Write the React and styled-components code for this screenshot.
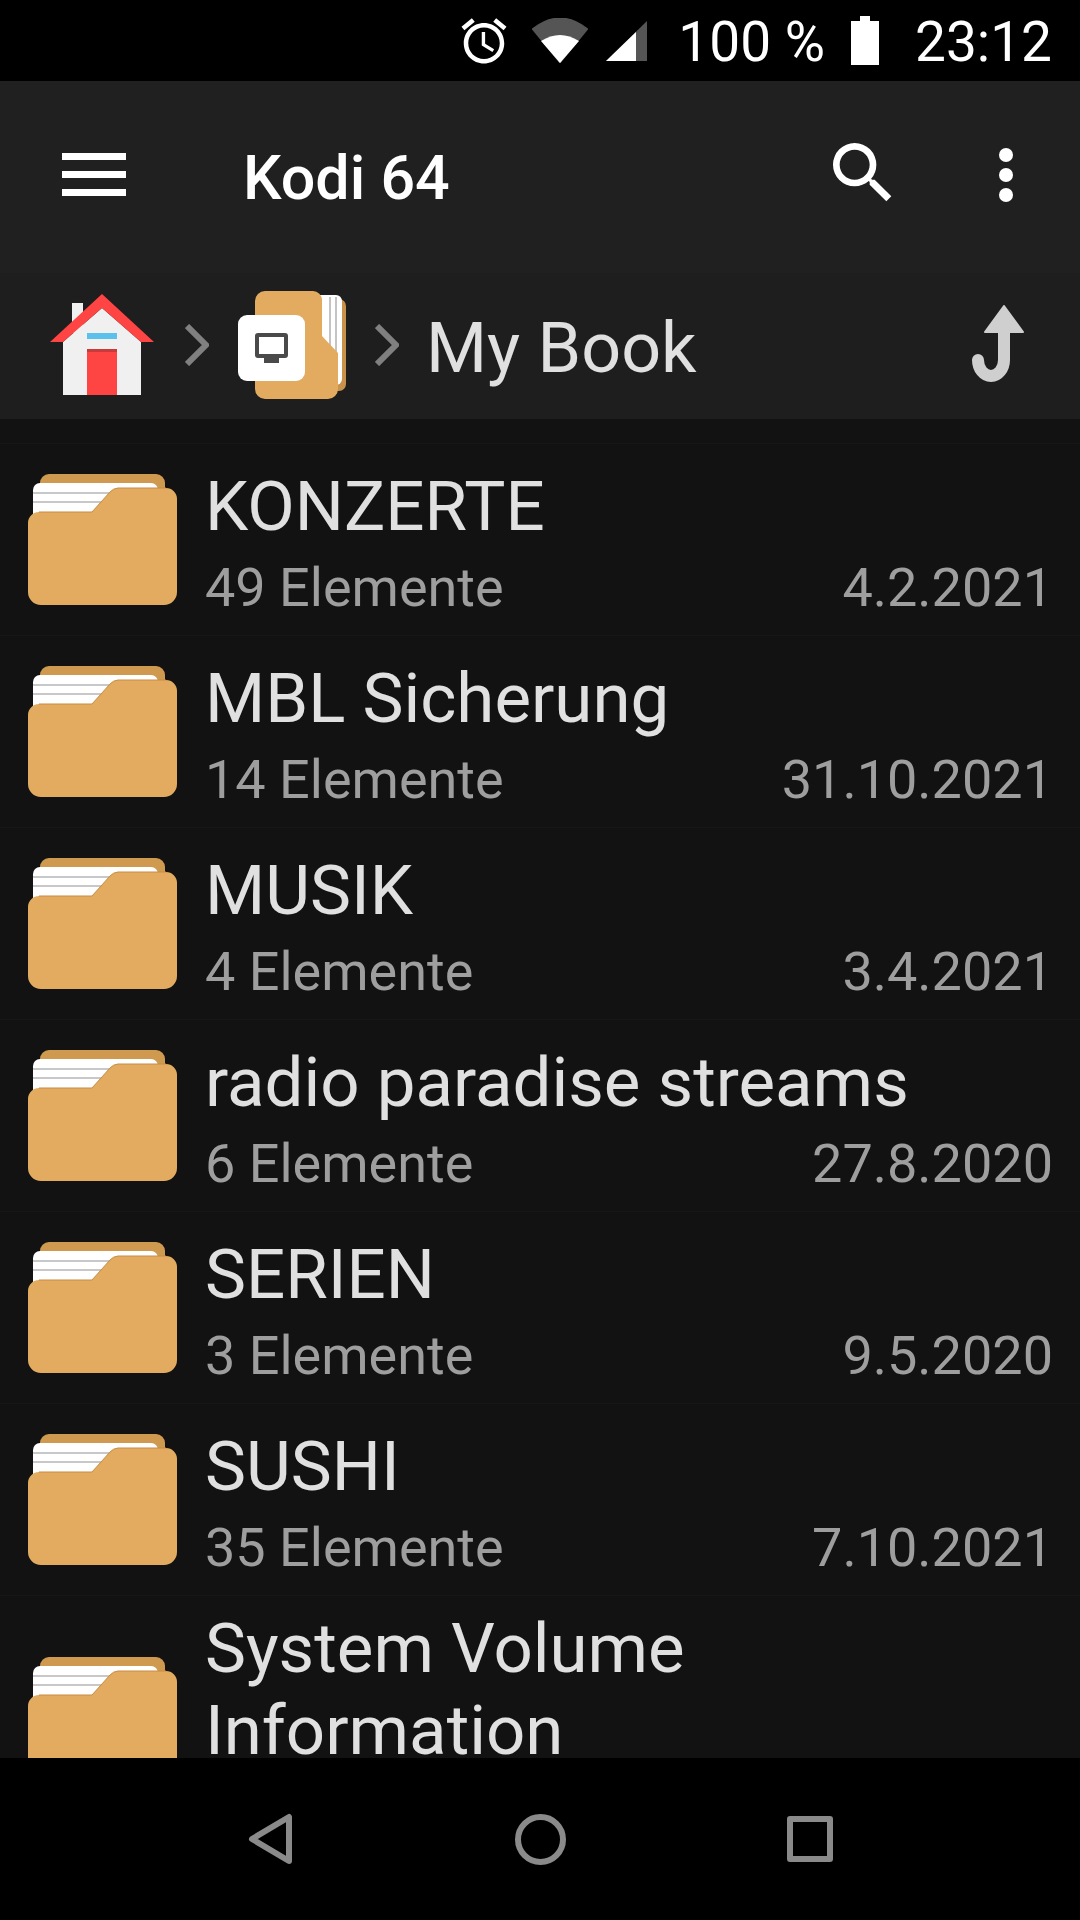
import React from 'react';
import styled, { createGlobalStyle } from 'styled-components';

const folders = [
  { name: 'KONZERTE', count: '49 Elemente', date: '4.2.2021' },
  { name: 'MBL Sicherung', count: '14 Elemente', date: '31.10.2021' },
  { name: 'MUSIK', count: '4 Elemente', date: '3.4.2021' },
  { name: 'radio paradise streams', count: '6 Elemente', date: '27.8.2020' },
  { name: 'SERIEN', count: '3 Elemente', date: '9.5.2020' },
  { name: 'SUSHI', count: '35 Elemente', date: '7.10.2021' },
  { name: 'System Volume Information', count: '', date: '' },
];

function FolderIcon() {
  return (
    <FolderSvg viewBox="0 0 150 132">
      <rect x="12" y="0" width="125" height="50" rx="9" fill="#cf9a4f" />
      <rect x="5" y="9" width="125" height="50" rx="7" fill="#ffffff" />
      <rect x="5" y="18" width="125" height="2" fill="#c8c8c8" />
      <rect x="5" y="27" width="125" height="2" fill="#c8c8c8" />
      <path d="M0 49 a11 11 0 0 1 11 -11 H64 L82 18 a12 12 0 0 1 8 -4 H138 a11 11 0 0 1 11 11 V118 a13 13 0 0 1 -13 13 H13 a13 13 0 0 1 -13 -13 Z" fill="#e2ab60" />
      <path d="M11 38 H64 L82 18 a12 12 0 0 1 8 -4 H138" fill="none" stroke="#c98a42" strokeWidth="1" />
    </FolderSvg>
  );
}

function HomeIcon() {
  return (
    <svg width="104" height="102" viewBox="0 0 104 102">
      <rect x="22" y="9" width="11" height="30" fill="#f0f0f0" />
      <polygon points="13,48 52,14 91,48 91,101 13,101" fill="#f0f0f0" />
      <rect x="37" y="39" width="30" height="6" fill="#5bc0eb" />
      <rect x="37" y="55" width="30" height="46" fill="#ff4444" />
      <rect x="37" y="55" width="30" height="3" fill="#c93a3a" />
      <polygon points="52,0 104,48 91,48 52,14 13,48 0,48" fill="#ff4444" />
    </svg>
  );
}

function DriveFolderIcon() {
  return (
    <DriveSvg viewBox="0 0 108 108">
      <rect x="60" y="8" width="48" height="92" rx="7" fill="#c8924a" />
      <rect x="60" y="4" width="44" height="90" rx="6" fill="#ffffff" />
      <rect x="91" y="6" width="2" height="86" fill="#c4c4c4" />
      <rect x="97" y="6" width="2" height="86" fill="#c4c4c4" />
      <path d="M17 10 a10 10 0 0 1 10 -10 H75 a9 9 0 0 1 9 9 V45 L100 62 V98 a10 10 0 0 1 -10 10 H27 a10 10 0 0 1 -10 -10 Z" fill="#e2ab60" />
      <rect x="0" y="24" width="67" height="66" rx="9" fill="#ffffff" />
      <rect x="19" y="44" width="29" height="21" rx="1" fill="none" stroke="#4a4a4a" strokeWidth="4" />
      <rect x="26" y="67" width="15" height="5" fill="#4a4a4a" />
    </DriveSvg>
  );
}

function Chevron() {
  return (
    <ChevronSvg viewBox="0 0 24 42">
      <path d="M2 2 L21 21 L2 40" fill="none" stroke="#808080" strokeWidth="6" />
    </ChevronSvg>
  );
}

function App() {
  return (
    <Screen>
      <GlobalStyle />
      <StatusBar>
        <StatusIcon width="54" height="54" viewBox="0 0 24 24" $gap={0}>
          <path fill="#fff" d="M22 5.72l-4.6-3.86-1.29 1.53 4.6 3.86L22 5.72zM7.88 3.39L6.6 1.86 2 5.71l1.29 1.53 4.59-3.85zM12.5 8H11v6l4.75 2.85.75-1.23-4-2.37V8zM12 4c-4.97 0-9 4.03-9 9s4.03 9 9 9 9-4.03 9-9-4.03-9-9-9zm0 16c-3.87 0-7-3.13-7-7s3.13-7 7-7 7 3.13 7 7-3.13 7-7 7z" />
        </StatusIcon>
        <StatusIcon width="58" height="46" viewBox="0 0 58 46" $gap={20}>
          <path fill="#555" stroke="#555" strokeWidth="2" strokeLinejoin="round" d="M29 44 L2 11 Q29 -10 56 11 Z" />
          <path fill="#fff" d="M29 45 L10 23 Q29 11 48 23 Z" />
        </StatusIcon>
        <StatusIcon width="41" height="40" viewBox="0 0 41 40" $gap={17}>
          <polygon points="0,40 41,0 41,40" fill="#555" />
          <polygon points="0,40 30,11 30,40" fill="#fff" />
        </StatusIcon>
        <StatusText $gap={31}>100 %</StatusText>
        <StatusIcon width="28" height="49" viewBox="0 0 28 49" $gap={26}>
          <path fill="#fff" d="M9 0 H19 V5 H28 V49 H0 V5 H9 Z" />
        </StatusIcon>
        <StatusText $gap={36}>23:12</StatusText>
      </StatusBar>

      <Toolbar>
        <MenuIcon>
          <span />
          <span />
          <span />
        </MenuIcon>
        <Title>Kodi 64</Title>
        <SearchIcon width="80" height="80" viewBox="0 0 24 24">
          <path fill="#fff" d="M15.5 14h-.79l-.28-.27A6.471 6.471 0 0 0 16 9.5 6.5 6.5 0 1 0 9.5 16c1.61 0 3.09-.59 4.23-1.57l.27.28v.79l5 4.99L20.49 19l-4.99-5zm-6 0C7.01 14 5 11.99 5 9.5S7.01 5 9.5 5 14 7.01 14 9.5 11.99 14 9.5 14z" />
        </SearchIcon>
        <Dots>
          <i />
          <i />
          <i />
        </Dots>
      </Toolbar>

      <Breadcrumb>
        <HomeIcon />
        <Chevron />
        <DriveFolderIcon />
        <Chevron />
        <Crumb>My Book</Crumb>
        <UpIcon width="56" height="80" viewBox="0 0 56 80">
          <polygon points="36,1 55,27 17,27" fill="#cfcfcf" stroke="#cfcfcf" strokeWidth="2" strokeLinejoin="round" />
          <path d="M36 24 V55 a13 16 0 0 1 -26 0" fill="none" stroke="#cfcfcf" strokeWidth="12" strokeLinecap="round" />
        </UpIcon>
      </Breadcrumb>

      <List>
        {folders.map((f) => (
          <Row key={f.name}>
            <FolderIcon />
            <RowText>
              <RowName>{f.name}</RowName>
              <RowMeta>
                <span>{f.count}</span>
                <span>{f.date}</span>
              </RowMeta>
            </RowText>
          </Row>
        ))}
      </List>

      <NavBar>
        <NavButton>
          <svg width="44" height="52" viewBox="0 0 44 52">
            <path d="M41 4 V48 L4 26 Z" fill="none" stroke="#8a8a8a" strokeWidth="6" strokeLinejoin="round" />
          </svg>
        </NavButton>
        <NavButton>
          <NavCircle />
        </NavButton>
        <NavButton>
          <NavSquare />
        </NavButton>
      </NavBar>
    </Screen>
  );
}

export default App;

const GlobalStyle = createGlobalStyle`
  html, body {
    margin: 0;
    background: #000;
  }
`;

const Screen = styled.div`
  display: flex;
  flex-direction: column;
  width: 1080px;
  height: 1920px;
  overflow: hidden;
  font-family: Roboto, "Liberation Sans", sans-serif;
  background: #121212;
`;

const StatusBar = styled.div`
  display: flex;
  flex: none;
  align-items: center;
  justify-content: flex-end;
  height: 81px;
  padding-right: 28px;
  background: #000;
`;

const StatusIcon = styled.svg`
  flex: none;
  margin-left: ${(p) => p.$gap}px;
`;

const StatusText = styled.span`
  margin-left: ${(p) => p.$gap}px;
  padding-top: 4px;
  color: #fff;
  font-size: 55px;
  line-height: 77px;
`;

const Toolbar = styled.div`
  display: flex;
  flex: none;
  align-items: center;
  height: 192px;
  padding-left: 62px;
  background: #202020;
`;

const MenuIcon = styled.div`
  display: flex;
  flex-direction: column;
  justify-content: space-between;
  width: 64px;
  height: 43px;
  margin-bottom: 6px;

  & span {
    display: block;
    height: 7px;
    background: #fff;
  }
`;

const Title = styled.div`
  flex: 1;
  margin-left: 117px;
  padding-top: 2px;
  color: #fff;
  font-size: 61px;
  font-weight: 500;
`;

const SearchIcon = styled.svg`
  flex: none;
  margin-bottom: 8px;
`;

const Dots = styled.div`
  display: flex;
  flex-direction: column;
  justify-content: space-between;
  width: 14px;
  height: 54px;
  margin-left: 96px;
  margin-right: 67px;
  margin-bottom: 4px;

  & i {
    display: block;
    width: 14px;
    height: 14px;
    border-radius: 50%;
    background: #fff;
  }
`;

const Breadcrumb = styled.div`
  display: flex;
  flex: none;
  align-items: center;
  height: 146px;
  padding-left: 50px;
  padding-right: 56px;
  padding-bottom: 2px;
  box-sizing: border-box;
  background: #1e1e1e;
`;

const ChevronSvg = styled.svg`
  flex: none;
  width: 24px;
  height: 42px;
  margin: 0 27px 0 31px;
`;

const DriveSvg = styled.svg`
  flex: none;
  width: 108px;
  height: 108px;
  margin: 0 -2px 0 2px;
`;

const Crumb = styled.div`
  flex: 1;
  padding-top: 6px;
  color: #e0e0e0;
  font-size: 70px;
`;

const UpIcon = styled.svg`
  flex: none;
`;

const List = styled.div`
  flex: 1;
  min-height: 0;
  overflow: hidden;
  padding-top: 24px;
  background: #121212;
`;

const Row = styled.div`
  display: flex;
  align-items: center;
  min-height: 192px;
  padding: 6px 27px 6px 28px;
  border-top: 1px solid #161616;
  box-sizing: border-box;
`;

const FolderSvg = styled.svg`
  flex: none;
  width: 150px;
  height: 132px;
`;

const RowText = styled.div`
  flex: 1;
  min-width: 0;
  margin-left: 27px;
  padding-top: 6px;
`;

const RowName = styled.div`
  max-width: 800px;
  color: #e0e0e0;
  font-size: 69px;
  line-height: 82px;
`;

const RowMeta = styled.div`
  display: flex;
  justify-content: space-between;
  min-height: 62px;
  margin-top: 9px;
  color: #9e9e9e;
  font-size: 54px;
  line-height: 62px;
`;

const NavBar = styled.div`
  display: flex;
  flex: none;
  align-items: center;
  justify-content: center;
  height: 162px;
  background: #000;
`;

const NavButton = styled.div`
  display: flex;
  align-items: center;
  justify-content: center;
  width: 270px;
`;

const NavCircle = styled.div`
  width: 51px;
  height: 51px;
  border: 6px solid #8a8a8a;
  border-radius: 50%;
  box-sizing: border-box;
`;

const NavSquare = styled.div`
  width: 46px;
  height: 46px;
  border: 6px solid #8a8a8a;
  border-radius: 3px;
  box-sizing: border-box;
`;
